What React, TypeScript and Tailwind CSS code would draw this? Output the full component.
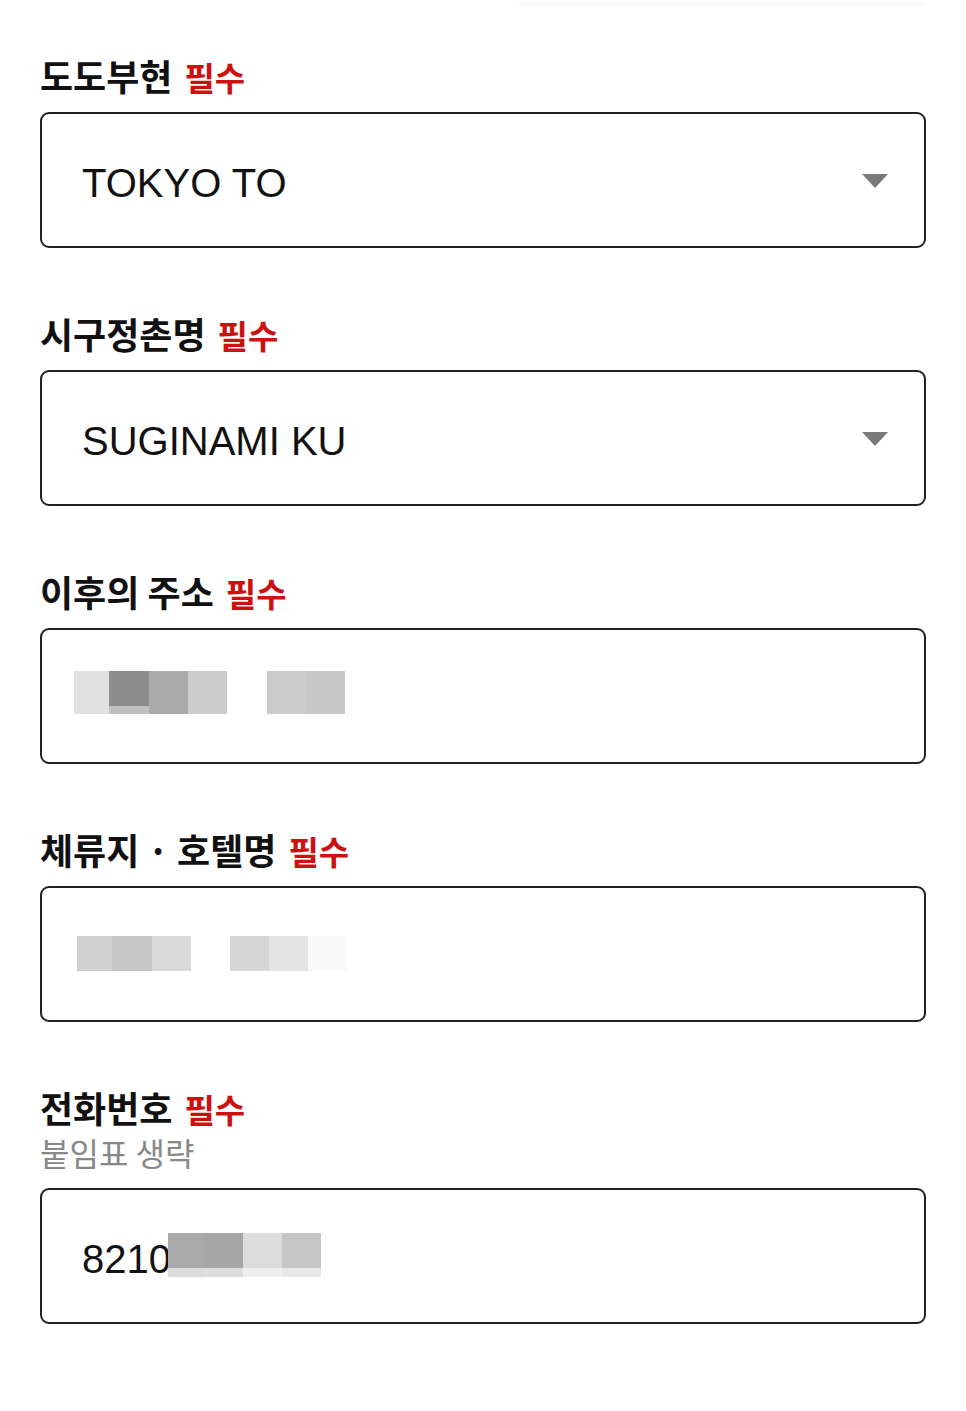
import React from "react";

type Block = { w: number; top: string; bottom?: string; split?: number };

const Field: React.FC<{ label: string; hint?: string; children: React.ReactNode }> = ({
  label,
  hint,
  children,
}) => (
  <div className="mb-[63px]">
    <div className="flex items-baseline gap-[12px] h-[44px]">
      <span className="inline-block leading-[44px] text-[36px] font-bold text-[#111]">{label}</span>
      <span className="inline-block leading-[44px] text-[33px] font-bold text-[#cc1111]">필수</span>
    </div>
    {hint && (
      <div className="h-[44px] pt-[2px]">
        <span className="inline-block leading-[42px] text-[32px] text-[#888]">{hint}</span>
      </div>
    )}
    <div className="mt-[15px] h-[136px] border-2 border-[#222] rounded-[9px] flex items-center pl-[40px] pr-[36px]">
      {children}
    </div>
  </div>
);

const Arrow = () => (
  <svg width="26" height="15" viewBox="0 0 26 15" className="ml-auto mt-[2px]">
    <path d="M0 0 H26 L13 14 Z" fill="#7a7a7a" />
  </svg>
);

const Mosaic: React.FC<{ blocks: Block[]; h: number; gapAt?: number; gap?: number }> = ({
  blocks,
  h,
  gapAt,
  gap = 0,
}) => (
  <div className="flex">
    {blocks.map((b, i) => (
      <div
        key={i}
        className="flex flex-col"
        style={{ width: b.w, height: h, marginLeft: gapAt === i ? gap : 0 }}
      >
        <div style={{ background: b.top, height: b.split ?? h }} />
        {b.bottom && <div className="flex-1" style={{ background: b.bottom }} />}
      </div>
    ))}
  </div>
);

export default function App() {
  return (
    <div
      className="w-[966px] min-h-[1411px] bg-white"
      style={{ fontFamily: '"Noto Sans CJK KR", "Liberation Sans", sans-serif' }}
    >
      <div className="ml-[518px] w-[408px] h-[2px] bg-white rounded-b-lg shadow-[0_2px_6px_rgba(0,0,0,0.10)]" />
      <div className="px-[40px] pt-[51px]">
        <Field label="도도부현">
          <span className="mt-[6px] text-[40px] text-[#111] font-['Liberation_Sans',sans-serif]">TOKYO TO</span>
          <Arrow />
        </Field>
        <Field label="시구정촌명">
          <span className="mt-[6px] text-[40px] text-[#111] font-['Liberation_Sans',sans-serif]">SUGINAMI KU</span>
          <Arrow />
        </Field>
        <Field label="이후의 주소">
          <div className="-ml-[8px] -mt-[8px]">
            <Mosaic
              h={43}
              gapAt={4}
              gap={40}
              blocks={[
                { w: 35, top: "#e0e0e0" },
                { w: 40, top: "#8c8c8c", bottom: "#c0c0c0", split: 35 },
                { w: 39, top: "#aaaaaa" },
                { w: 39, top: "#cccccc" },
                { w: 40, top: "#cbcbcb" },
                { w: 38, top: "#c8c8c8" },
              ]}
            />
          </div>
        </Field>
        <Field label="체류지 · 호텔명">
          <div className="-ml-[5px] -mt-[2px]">
            <Mosaic
              h={35}
              gapAt={3}
              gap={39}
              blocks={[
                { w: 35, top: "#cfcfcf" },
                { w: 40, top: "#c8c8c8" },
                { w: 39, top: "#d9d9d9" },
                { w: 39, top: "#d6d6d6" },
                { w: 39, top: "#e3e3e3" },
                { w: 39, top: "#fafafa" },
              ]}
            />
          </div>
        </Field>
        <Field label="전화번호" hint="붙임표 생략">
          <span className="mt-[6px] text-[40px] text-[#111] font-['Liberation_Sans',sans-serif]">8210</span>
          <div className="-mt-[3px] -ml-[3px]">
            <Mosaic
              h={44}
              blocks={[
                { w: 36, top: "#aaaaaa", bottom: "#dcdcdc", split: 35 },
                { w: 39, top: "#a6a6a6", bottom: "#dedede", split: 35 },
                { w: 39, top: "#dcdcdc", bottom: "#eeeeee", split: 35 },
                { w: 39, top: "#c6c6c6", bottom: "#e8e8e8", split: 35 },
              ]}
            />
          </div>
        </Field>
      </div>
    </div>
  );
}
